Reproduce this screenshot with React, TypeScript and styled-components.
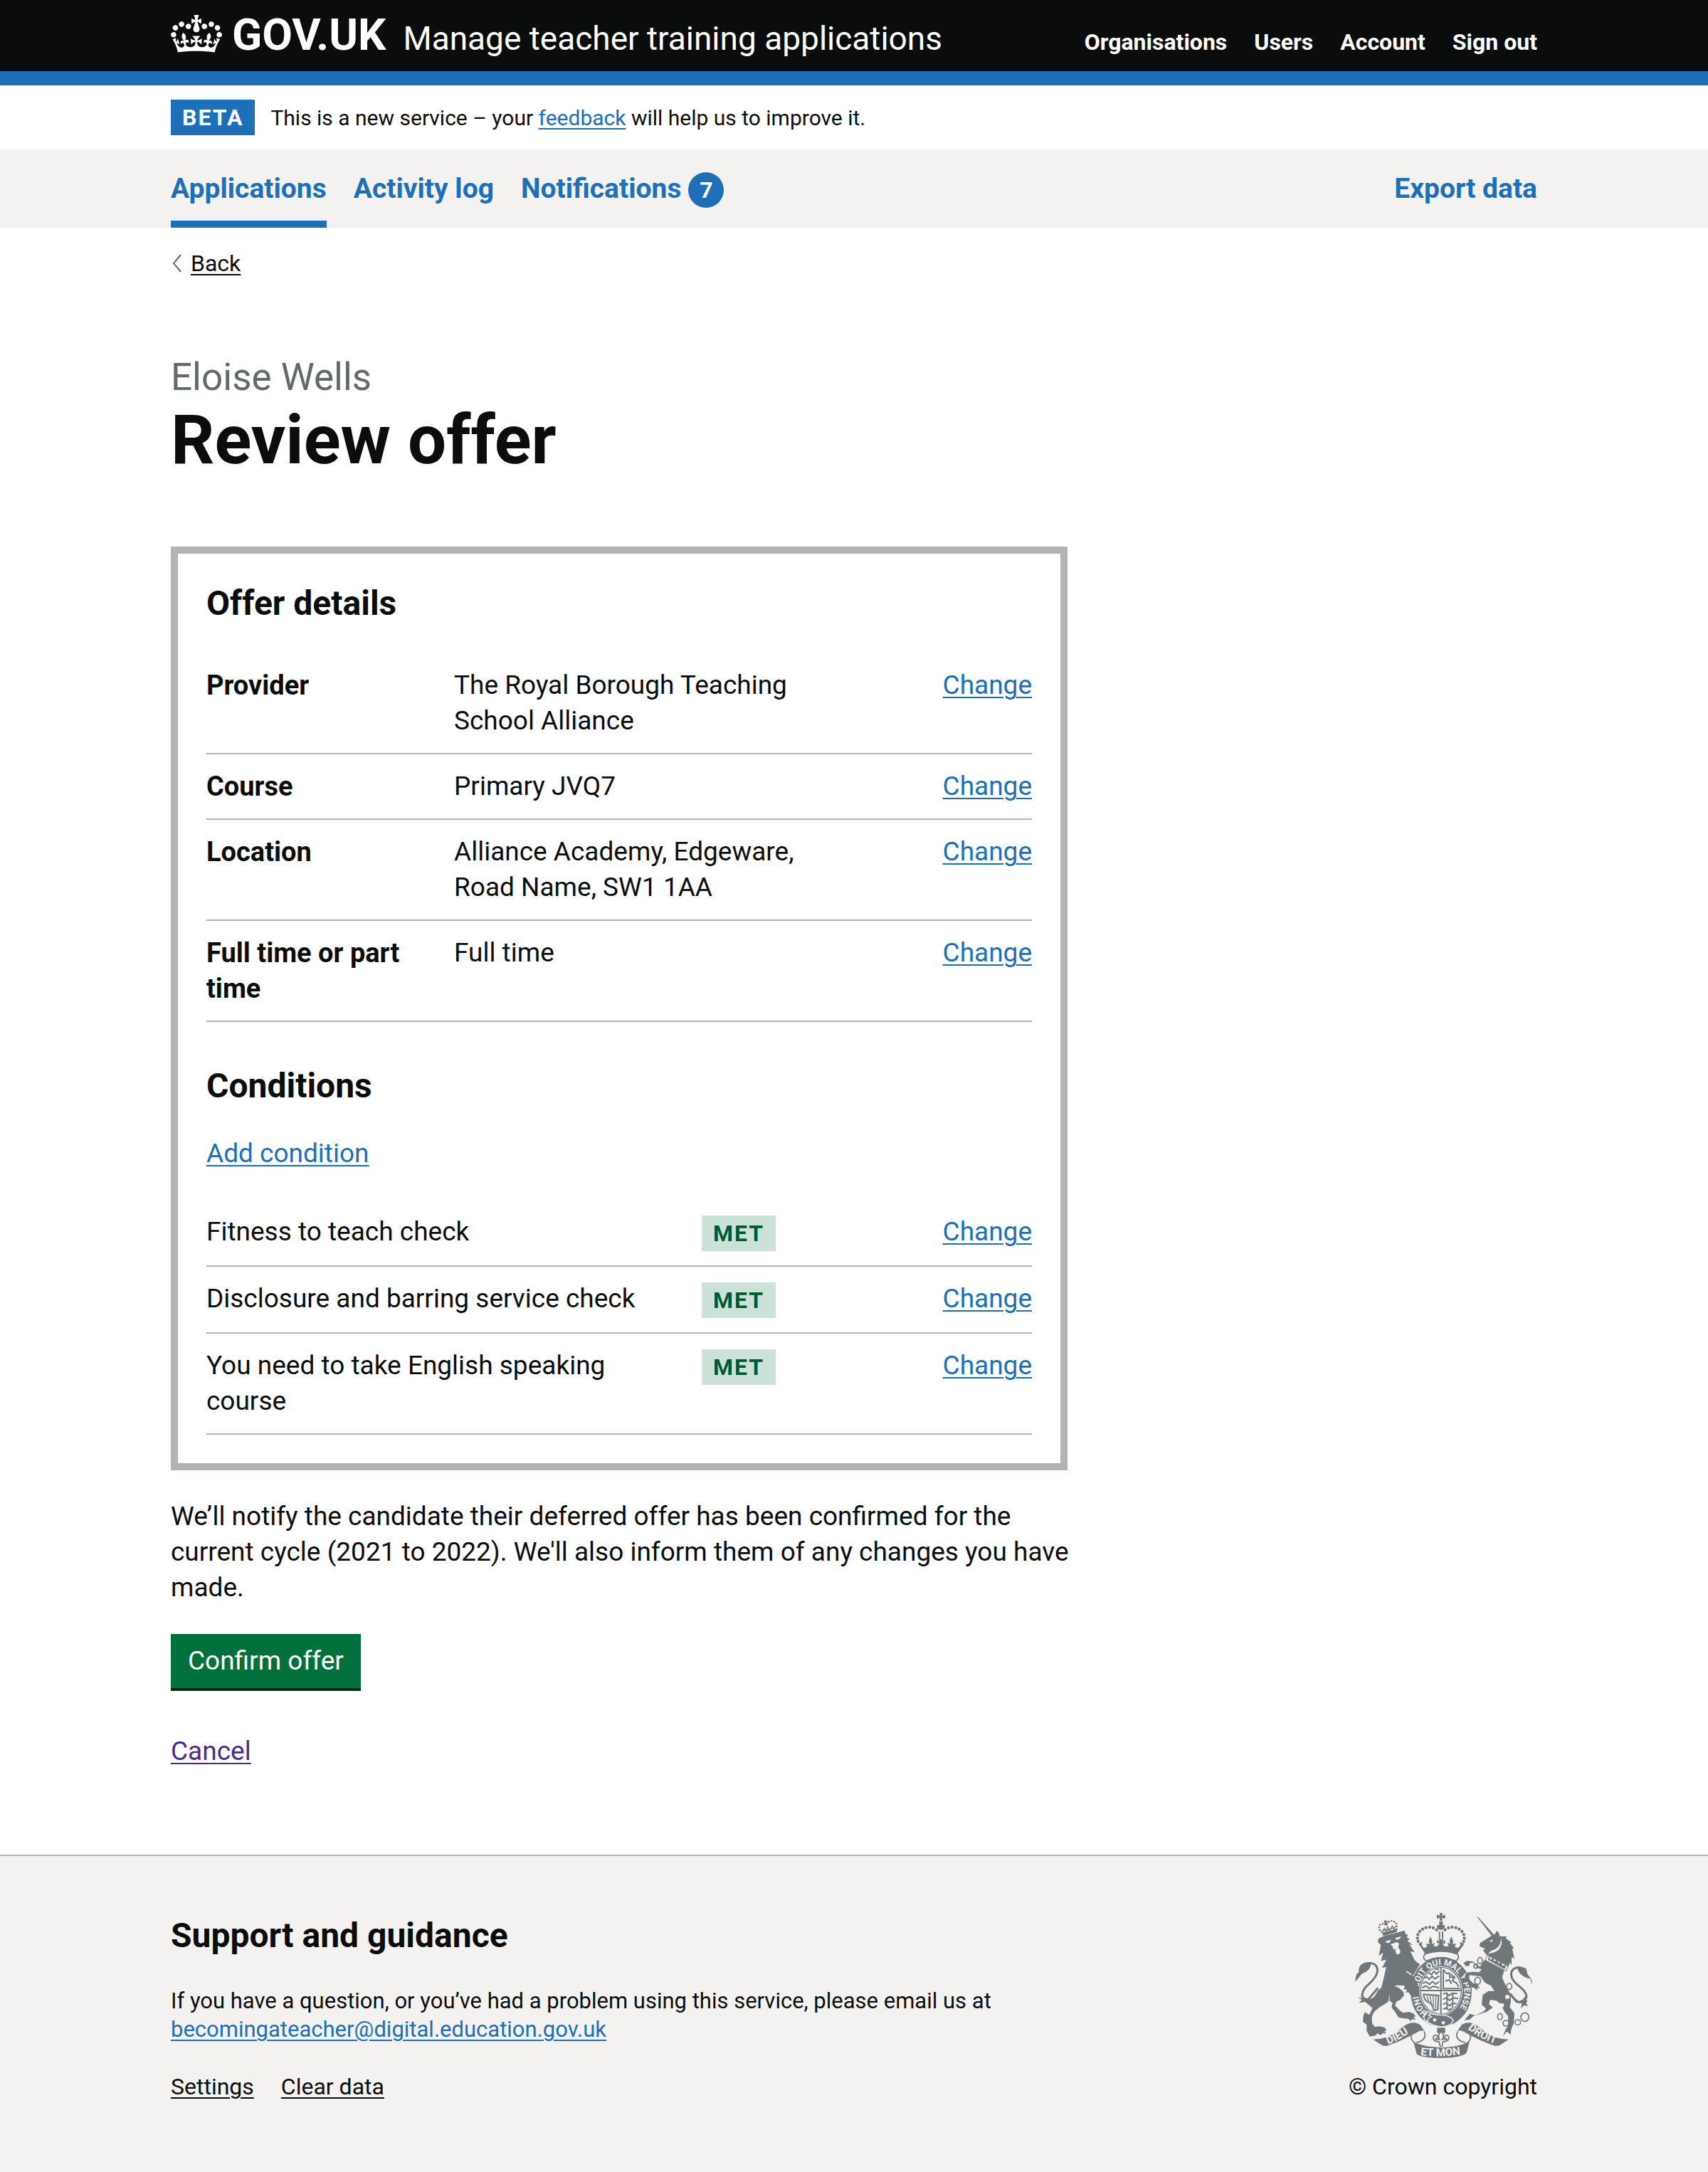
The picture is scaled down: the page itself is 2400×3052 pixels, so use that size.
import React from "react";
import styled, { createGlobalStyle, css } from "styled-components";

const colour = {
  text: "#0b0c0c",
  secondary: "#626a6e",
  blue: "#1d70b8",
  visited: "#4c2c92",
  grey: "#b1b4b6",
  cardGrey: "#b2b3b4",
  light: "#f3f2f1",
  green: "#00703c",
  greenShadow: "#002d18",
  tagGreen: "#cce2d8",
  tagGreenText: "#005a30",
  crest: "#6f777b",
};

const GlobalStyle = createGlobalStyle`
  *, *::before, *::after { box-sizing: border-box; }
  body {
    margin: 0;
    background: ${colour.light};
    color: ${colour.text};
    font-family: Roboto, "Liberation Sans", sans-serif;
    font-size: 37px;
    line-height: 50px;
  }
  h1, h2, p, dl, dd, dt, ul { margin: 0; padding: 0; }
  ul { list-style: none; }
`;

const Container = styled.div`
  max-width: 1920px;
  margin: 0 auto;
  @media (max-width: 2040px) {
    margin: 0 60px;
  }
`;

const Header = styled.header`
  background: ${colour.text};
  color: #fff;
  border-bottom: 20px solid ${colour.blue};
`;

const HeaderRow = styled(Container)`
  display: flex;
  flex-wrap: wrap;
  align-items: baseline;
  min-height: 100px;
  padding-top: 14px;
`;

const Brand = styled.a`
  display: flex;
  align-items: baseline;
  gap: 14px;
  color: #fff;
  font-size: 62px;
  font-weight: 700;
  line-height: 70px;
  text-decoration: none;
`;

const CrownSvg = styled.svg`
  width: 72px;
  height: 53px;
  align-self: flex-start;
  margin-top: 7px;
`;

const ServiceName = styled.a`
  margin-left: 24px;
  color: #fff;
  font-size: 46px;
  line-height: 60px;
  text-decoration: none;
`;

const AccountNav = styled.ul`
  display: flex;
  gap: 38px;
  margin-left: auto;
`;

const AccountLink = styled.a`
  color: #fff;
  font-size: 32px;
  font-weight: 700;
  line-height: 40px;
  text-decoration: none;
`;

const White = styled.div`
  background: #fff;
`;

const PhaseBanner = styled(Container)`
  display: flex;
  align-items: baseline;
  gap: 22px;
  padding: 20px 0;
`;

const PhaseText = styled.p`
  font-size: 30px;
  line-height: 40px;
`;

const Tag = styled.strong<{ $tone: "blue" | "green" }>`
  display: inline-block;
  padding: 0 16px;
  font-size: 32px;
  line-height: 50px;
  letter-spacing: 2px;
  text-transform: uppercase;
  ${(p) =>
    p.$tone === "blue"
      ? css`
          background: ${colour.blue};
          color: #fff;
        `
      : css`
          background: ${colour.tagGreen};
          color: ${colour.tagGreenText};
        `}
`;

const Link = styled.a<{ $tone?: "text" | "visited" }>`
  color: ${(p) =>
    p.$tone === "text" ? colour.text : p.$tone === "visited" ? colour.visited : colour.blue};
  text-decoration: underline;
  text-decoration-thickness: 2px;
  text-underline-offset: 4px;
`;

const PrimaryNav = styled.nav`
  background: ${colour.light};
`;

const NavRow = styled(Container)`
  display: flex;
  justify-content: space-between;
`;

const NavList = styled.ul`
  display: flex;
  gap: 38px;
`;

const NavLink = styled.a<{ $current?: boolean }>`
  display: flex;
  align-items: baseline;
  height: 110px;
  padding-top: 30px;
  border-bottom: 10px solid ${(p) => (p.$current ? colour.blue : "transparent")};
  color: ${colour.blue};
  font-size: 39px;
  font-weight: 700;
  text-decoration: none;
`;

const Count = styled.span`
  width: 50px;
  margin-left: 10px;
  border-radius: 50%;
  background: ${colour.blue};
  color: #fff;
  font-size: 32px;
  text-align: center;
`;

const Main = styled.main`
  padding-bottom: 120px;
`;

const BackRow = styled.div`
  display: flex;
  align-items: center;
  gap: 12px;
  padding: 30px 0 110px;
  font-size: 32px;
  line-height: 40px;
`;

const Chevron = styled.svg`
  width: 16px;
  height: 26px;
`;

const Caption = styled.span`
  display: block;
  margin-bottom: 8px;
  color: ${colour.secondary};
  font-size: 53px;
  font-weight: 400;
  line-height: 60px;
`;

const Title = styled.h1`
  margin-bottom: 100px;
  font-size: 96px;
  line-height: 100px;
`;

const Column = styled.div`
  max-width: 1280px;
`;

const Card = styled.section`
  max-width: 1260px;
  margin-bottom: 40px;
  padding: 40px;
  border: 10px solid ${colour.cardGrey};
`;

const Heading = styled.h2`
  margin-bottom: 40px;
  font-size: 48px;
  line-height: 60px;
`;

const FooterHeading = styled(Heading)`
  line-height: 64px;
`;

const SummaryList = styled.dl`
  margin-bottom: 60px;
  &:last-child {
    margin-bottom: 0;
  }
`;

const SummaryRow = styled.div<{ $columns: string }>`
  display: grid;
  grid-template-columns: ${(p) => p.$columns};
  padding: 20px 0;
  border-bottom: 2px solid ${colour.cardGrey};
`;

const Key = styled.dt<{ $plain?: boolean }>`
  padding-right: 40px;
  ${(p) =>
    !p.$plain &&
    css`
      font-size: 38px;
      font-weight: 700;
    `}
`;

const Value = styled.dd`
  padding-right: 40px;
`;

const TagCell = styled.dd`
  display: flex;
  align-items: flex-start;
  padding-top: 2px;
`;

const Action = styled.dd`
  text-align: right;
`;

const Paragraph = styled.p`
  margin-bottom: 40px;
`;

const SmallParagraph = styled(Paragraph)`
  font-size: 31px;
  line-height: 40px;
`;

const Button = styled.button`
  display: block;
  height: 76px;
  margin: 0 0 64px;
  padding: 0 24px;
  border: 0;
  background: ${colour.green};
  box-shadow: 0 4px 0 ${colour.greenShadow};
  color: #fff;
  font: inherit;
  cursor: pointer;
`;

const Footer = styled.footer`
  padding: 80px 0 100px;
  border-top: 2px solid ${colour.grey};
  background: ${colour.light};
  font-size: 32px;
  line-height: 40px;
`;

const FooterRow = styled(Container)`
  display: flex;
  justify-content: space-between;
  align-items: flex-start;
  gap: 60px;
`;

const FooterLinks = styled.ul`
  display: flex;
  gap: 38px;
`;

const Copyright = styled.a`
  display: flex;
  flex-direction: column;
  align-items: center;
  gap: 20px;
  color: ${colour.text};
  text-decoration: none;
  white-space: nowrap;
`;

const CrestSvg = styled.svg`
  width: 250px;
  height: 204px;
`;

function Crown() {
  return (
    <CrownSvg viewBox="0 0 132 97" aria-hidden="true">
      <path
        fill="currentColor"
        fillRule="evenodd"
        d="M25 30.2c3.5 1.5 7.7-.2 9.1-3.7 1.5-3.6-.2-7.8-3.9-9.2-3.6-1.4-7.6.3-9.1 3.9-1.4 3.5.3 7.5 3.9 9zM9 39.5c3.6 1.5 7.8-.2 9.2-3.7 1.5-3.6-.2-7.8-3.9-9.1-3.6-1.5-7.6.2-9.1 3.8-1.4 3.5.3 7.5 3.8 9zM4.4 57.2c3.5 1.5 7.7-.2 9.1-3.8 1.5-3.6-.2-7.7-3.9-9.1-3.5-1.5-7.6.3-9.1 3.8-1.4 3.5.3 7.6 3.9 9.1zm38.3-21.4c3.5 1.5 7.7-.2 9.1-3.8 1.5-3.6-.2-7.7-3.9-9.1-3.6-1.5-7.6.3-9.1 3.8-1.3 3.6.4 7.7 3.9 9.1zm64.4-5.6c-3.6 1.5-7.8-.2-9.1-3.7-1.5-3.6.2-7.8 3.8-9.2 3.6-1.4 7.7.3 9.2 3.9 1.3 3.5-.4 7.5-3.9 9zm15.9 9.3c-3.6 1.5-7.7-.2-9.1-3.7-1.5-3.6.2-7.8 3.7-9.1 3.6-1.5 7.7.2 9.2 3.8 1.5 3.5-.3 7.5-3.8 9zm4.7 17.7c-3.6 1.5-7.8-.2-9.2-3.8-1.5-3.6.2-7.7 3.9-9.1 3.6-1.5 7.7.3 9.2 3.8 1.3 3.5-.4 7.6-3.9 9.1zM89.3 35.8c-3.6 1.5-7.8-.2-9.2-3.8-1.4-3.6.2-7.7 3.9-9.1 3.6-1.5 7.7.3 9.2 3.8 1.4 3.6-.3 7.7-3.9 9.1zM69.7 17.7l8.9 4.7V9.3l-8.9 2.8c-.2-.3-.5-.6-.9-.9L72.4 0H59.6l3.5 11.2c-.3.3-.6.5-.9.9l-8.8-2.8v13.1l8.8-4.7c.3.3.6.7.9.9l-5 15.4v.1c-.2.8-.4 1.6-.4 2.4 0 4.1 3.1 7.5 7 8.1h.2c.3 0 .7.1 1 .1.4 0 .7 0 1-.1h.2c4-.6 7.1-4.1 7.1-8.1 0-.8-.1-1.7-.4-2.4V34l-5.1-15.4c.4-.2.7-.6 1-.9zM66 92.8c16.9 0 32.8 1.1 47.1 3.2 4-16.9 8.9-26.7 14-33.5l-9.6-3.4c1 4.9 1.1 7.2 0 10.2-1.5-1.4-3-4.3-4.2-8.7L108.6 76c2.8-2 5-3.2 7.5-3.3-4.4 9.4-10 11.9-13.6 11.2-4.3-.8-6.3-4.6-5.6-7.9 1-4.7 5.7-5.9 8-.5 4.3-8.7-3-11.4-7.6-8.8 7.1-7.2 7.9-13.5 2.1-21.1-8 6.1-8.1 12.3-4.5 20.8-4.7-5.4-12.1-2.5-9.5 6.2 3.4-5.2 7.9-2 7.2 3.1-.6 4.3-6.4 7.8-13.5 7.2-10.3-.9-10.9-8-11.2-13.8 2.5-.5 7.1 1.8 11 7.3L80.2 60c-4.1 4.4-8 5.3-12.3 5.4 1.4-4.4 8-11.6 8-11.6H55.5s6.4 7.2 7.9 11.6c-4.2-.1-8-1-12.3-5.4l1.4 16.4c3.9-5.5 8.5-7.7 10.9-7.3-.3 5.8-.9 12.8-11.1 13.8-7.2.6-12.9-2.9-13.5-7.2-.7-5 3.8-8.3 7.1-3.1 2.7-8.7-4.6-11.6-9.4-6.2 3.7-8.5 3.6-14.7-4.6-20.8-5.8 7.6-5 13.9 2.2 21.1-4.7-2.6-11.9.1-7.7 8.8 2.3-5.5 7.1-4.2 8.1.5.7 3.3-1.3 7.1-5.7 7.9-3.5.7-9-1.8-13.5-11.2 2.5.1 4.7 1.3 7.5 3.3l-4.7-15.4c-1.2 4.4-2.7 7.2-4.3 8.7-1.1-3-.9-5.3 0-10.2l-9.5 3.4c5 6.9 9.9 16.7 14 33.5 14.8-2.1 30.8-3.2 47.7-3.2z"
      />
    </CrownSvg>
  );
}

const crownPearls: Array<[number, number]> = [
  [419, 155], [405, 147], [390, 144], [374, 146], [360, 152], [348, 162], [340, 175], [338, 190], [341, 204],
];

const unicornChain: Array<[number, number, number, number]> = [
  [602, 285, 10, 13], [584, 308, 8, 9], [592, 370, 12, 15], [725, 394, 11, 13], [686, 521, 10, 13],
  [711, 549, 12, 12], [761, 545, 12, 11], [791, 523, 17, 18],
];

function Crest() {
  const g = colour.crest;
  const bg = colour.light;
  return (
    <CrestSvg viewBox="72 84 750 612" aria-hidden="true">
      <defs>
        <path id="garter" d="M383 508A97 112 0 1 1 486 514" />
        <path id="dieu" d="M215 638Q264 620 322 576" />
        <path id="mon" d="M351 684Q437 694 530 679" />
        <path id="droit" d="M550 573Q605 618 680 640" />
      </defs>

      {/* lion */}
      <g fill={g}>
        <path d="M192 183L284 158L287 172L299 178L292 187L306 194L296 202L319 220L304 217L326 249L308 246L326 282L344 299C338 318 322 330 317 347L345 371L338 386L349 409L337 431L328 424L330 440L315 434L304 425L309 413L289 421L294 406L280 407L285 391L265 389L240 390L263 402L279 417L282 431L265 451L249 458L244 474L264 496L278 505L303 501L321 508L332 520L322 522L331 534L316 532L310 539L299 530L280 528L259 525L242 498L229 483L233 463L220 454L222 423L215 459L175 484L155 502L146 521L147 549L158 564L178 562L199 566L209 579L199 582L206 592L190 592L183 600L170 591L161 601L138 605L124 582L124 555L108 543L110 519L116 502L135 513L150 482L158 443L171 411L186 399L198 351L206 312L189 315L207 281L184 286L194 251L175 265L184 219L171 206L174 192Z" />
        <path d="M76 374C78 350 80 340 92 333C86 311 104 291 132 292C143 295 144 304 138 315C124 339 103 334 96 350Z" />
        <path d="M149 485L118 459L91 463L104 451L88 441L109 443L101 424L117 442L132 447Q148 449 161 430L170 414L166 440Z" />
      </g>
      <path d="M123 299C152 287 175 307 168 336C158 379 107 389 105 430Q106 453 132 447L172 400" fill="none" stroke={g} strokeWidth="9" />
      <path d="M318 347L292 331" stroke={bg} strokeWidth="5" />
      <g fill={bg}>
        <path d="M202 204L227 197L221 209L210 211Z" />
        <path d="M244 190L270 182L262 194L250 197Z" />
        <path d="M224 216L252 207L261 213L257 229L266 243Q269 257 254 259Q243 254 246 234L237 239L234 226Z" />
      </g>
      <g fill={g} stroke={g}>
        <path d="M189 168L252 151L250 164L195 181Z" />
        <path d="M188 157Q214 162 240 142M192 163L199 148L207 162L212 142L221 158L232 139L239 154L247 139" fill="none" strokeWidth="4" />
        <path d="M188 165C177 158 173 144 180 135C190 126 200 130 207 137C212 119 229 113 240 121C253 126 252 140 249 156" fill="none" strokeWidth="8" strokeDasharray="0 12" strokeLinecap="round" />
        <path d="M197 119L212 133M202 114L209 136M212 118L198 130" strokeWidth="5" />
      </g>

      {/* central crown */}
      <g fill={g}>
        <path d="M431 84H445L441 96L455 91V108L441 104L445 116H431L434 104L420 108V91L434 96Z" />
        <path d="M430 119H445V136H454Q456 153 438 156Q418 154 420 136H430Z" />
        {crownPearls.map(([x, y]) => (
          <React.Fragment key={`${x}-${y}`}>
            <circle cx={x} cy={y} r="6.5" />
            <circle cx={874 - x} cy={y} r="6.5" />
          </React.Fragment>
        ))}
        <path d="M428 162H434V192H428ZM441 162H447V192H441Z" />
        <path d="M342 214L359 206L356 220L365 232L380 226L374 213L389 216L386 202L393 183L401 203L398 215L411 210L406 224L421 225L431 212L420 211V199L433 205L425 194H450L442 205L455 199V214L442 212L453 225L470 224L464 210L477 214L473 202L481 183L489 202L487 216L500 212L496 227L510 232L520 219L517 206L536 214L511 249L504 261Q438 242 372 261L363 244Z" />
      </g>
      <path d="M369 258Q437 233 507 258Q518 272 502 287L482 281Q437 263 380 284L370 283Q359 272 369 258Z" fill={bg} stroke={g} strokeWidth="5" />

      {/* garter and shield */}
      <ellipse cx="438" cy="416" rx="129" ry="147" fill={g} />
      <path d="M346 298L315 347" stroke={g} strokeWidth="8" />
      <ellipse cx="437" cy="412" rx="91" ry="104" fill={bg} />
      <ellipse cx="437" cy="412" rx="86" ry="99" fill="none" stroke={g} strokeWidth="4" />
      <path d="M437 314V510M351 411H524" stroke={g} strokeWidth="6" />
      <g fill="none" stroke={g} strokeWidth="6">
        <path d="M385 336L397 344L408 330L419 341L430 328M366 359L378 353L388 364L400 351L412 362L430 350M361 381L375 374L389 386L401 373L416 384L430 373M358 399L373 392L389 402L405 393L430 400M413 322L429 320" />
        <path d="M447 322V403H518M449 325L461 340L472 337L475 356L493 353L486 371L503 379L512 396M456 372L472 365L482 383M478 340L497 360" />
        <path d="M446 426L461 421L472 433L484 422L506 424M446 448L462 441L473 453L488 442L510 445M446 469L460 463L474 475L487 463L502 467M446 490L459 484L472 494L485 484M463 422V493M487 423V483" />
        <path d="M364 427L427 432L424 492L407 495Q403 464 376 456Q365 443 364 427Z" />
        <path d="M378 430L386 459M391 431L397 468M404 431L406 478M416 432L415 490" strokeWidth="4" />
      </g>
      <path d="M372 498C390 508 410 516 440 514C458 516 476 518 490 536L478 554C440 574 405 560 376 541L367 523Z" fill={g} stroke={bg} strokeWidth="4" />
      <path d="M371 504Q384 496 395 508L385 514L398 522L384 528L381 543Q363 536 366 518Z" fill={g} stroke={bg} strokeWidth="4" />
      <circle cx="411" cy="535" r="7" fill={bg} />
      <circle cx="447" cy="547" r="7" fill={bg} />
      <text fill={bg} fontSize="36" fontWeight="700">
        <textPath href="#garter">
          HONI <tspan dx="26">SOIT QUI MAL Y PENSE</tspan>
        </textPath>
      </text>
      <path d="M303 382L338 371L344 420L334 440L312 432L300 418Z" fill={g} />

      {/* unicorn */}
      <g fill={g}>
        <path d="M588 99L594 101L662 177L651 181Z" />
        <path d="M652 179L667 171L671 158L682 169L685 182L716 183L709 190L734 208L728 211L746 234L738 234L747 277L736 270L734 303L727 294L723 309L630 262L617 245L615 231L600 224L602 211L626 196Z" />
        <path d="M621 282L704 326L695 356L713 395L731 427L732 459L727 481L747 506L744 549L733 576L732 596L714 584L699 604L709 576L722 557L720 518L705 501L690 469L671 454L644 450L640 469L656 482L631 500L602 510L574 519L559 533L536 536L559 509L582 516L614 501L628 488L609 470L613 430L637 413L663 413L648 391L623 378L603 351L582 349L558 346L555 363L571 379L590 385L602 402L589 399L593 411L577 400L559 395L547 370L533 381L541 349L548 335L571 332L599 334L609 322L591 316L575 294L560 295L554 309L542 307L531 295L548 286L574 289L588 306L602 310Z" />
        <path d="M824 391L813 361Q767 352 759 315L782 313L797 319L803 345Q822 359 824 391Z" />
        <path d="M729 432L754 463L779 465L774 486L788 473L804 477L796 463L803 455L792 448L794 434L782 449L765 456Q744 450 734 422Z" />
      </g>
      <path d="M786 319C750 303 726 326 736 356C747 389 798 404 798 437Q791 462 765 460Q744 450 730 424" fill="none" stroke={g} strokeWidth="9" />
      <path d="M690 188C692 215 676 238 650 242L635 257L662 250C686 241 699 219 690 188Z" fill={bg} />
      <path d="M640 204L653 196L656 204Z" fill={bg} />
      <path d="M607 235L623 235" stroke={bg} strokeWidth="5" />
      <path d="M632 262L720 308L712 329L624 283Z" fill={bg} stroke={g} strokeWidth="3" />
      <path d="M635 281L640 266L646 283L657 272L662 289L674 281L680 298L690 290L697 307L713 304L705 321Z" fill={g} />
      {unicornChain.map(([x, y, rx, ry]) => (
        <ellipse key={`${x}-${y}`} cx={x} cy={y} rx={rx} ry={ry} fill="none" stroke={g} strokeWidth="5" />
      ))}
      <g fill={bg}>
        <circle cx="717" cy="438" r="9" />
        <circle cx="694" cy="473" r="9" />
        <circle cx="725" cy="394" r="8" />
      </g>

      {/* motto ribbon */}
      <g fill={g} stroke={bg} strokeWidth="3">
        <path d="M147 616Q220 616 270 568Q314 530 350 554L370 583Q352 577 334 590Q270 626 210 646L192 645Z" />
        <path d="M727 616Q654 616 604 568Q560 530 524 554L504 583Q522 577 540 590Q604 626 664 646L682 645Z" />
        <path d="M320 628Q437 672 559 628L546 676Q520 697 437 697Q354 697 334 680Z" />
      </g>
      <g fill="none" stroke={g} strokeWidth="5">
        <path d="M355 575C330 581 307 594 312 612Q318 632 346 642M366 583C375 602 370 616 350 626L334 630" />
        <path d="M519 575C544 581 567 594 562 612Q556 632 528 642M508 583C499 602 504 616 524 626L540 630" />
      </g>
      <g fill={bg} fontSize="46" fontWeight="700">
        <text><textPath href="#dieu">DIEU</textPath></text>
        <text><textPath href="#mon">ET MON</textPath></text>
        <text><textPath href="#droit">DROIT</textPath></text>
      </g>

      {/* fleur-de-lis */}
      <path d="M421 568H455V590H421Z" fill={g} />
      <g fill={bg} stroke={g} strokeWidth="5">
        <path d="M438 583Q455 599 443 618H463Q457 606 447 612Q454 593 469 603Q476 620 456 626L445 628L442 645H433L430 628L419 626Q400 620 406 603Q421 593 429 612Q418 606 414 618H432Q420 599 438 583Z" />
      </g>
    </CrestSvg>
  );
}

const offerRows = [
  { key: "Provider", value: "The Royal Borough Teaching School Alliance" },
  { key: "Course", value: "Primary JVQ7" },
  { key: "Location", value: "Alliance Academy, Edgeware, Road Name, SW1 1AA" },
  { key: "Full time or part time", value: "Full time" },
];

const conditions = [
  "Fitness to teach check",
  "Disclosure and barring service check",
  "You need to take English speaking course",
];

export default function App() {
  return (
    <>
      <GlobalStyle />
      <Header>
        <HeaderRow>
          <Brand href="#">
            <Crown />
            GOV.UK
          </Brand>
          <ServiceName href="#">Manage teacher training applications</ServiceName>
          <AccountNav>
            {["Organisations", "Users", "Account", "Sign out"].map((item) => (
              <li key={item}>
                <AccountLink href="#">{item}</AccountLink>
              </li>
            ))}
          </AccountNav>
        </HeaderRow>
      </Header>

      <White>
        <PhaseBanner>
          <Tag $tone="blue">Beta</Tag>
          <PhaseText>
            This is a new service – your <Link href="#">feedback</Link> will help us to improve it.
          </PhaseText>
        </PhaseBanner>
      </White>

      <PrimaryNav aria-label="Primary">
        <NavRow>
          <NavList>
            <li>
              <NavLink href="#" $current aria-current="page">Applications</NavLink>
            </li>
            <li>
              <NavLink href="#">Activity log</NavLink>
            </li>
            <li>
              <NavLink href="#">
                Notifications <Count>7</Count>
              </NavLink>
            </li>
          </NavList>
          <NavLink href="#">Export data</NavLink>
        </NavRow>
      </PrimaryNav>

      <White>
        <Container>
          <Main>
            <BackRow>
              <Chevron viewBox="0 0 16 26" aria-hidden="true">
                <path d="M14 1L4 13L14 25" fill="none" stroke={colour.secondary} strokeWidth="2" />
              </Chevron>
              <Link href="#" $tone="text">Back</Link>
            </BackRow>
            <Title>
              <Caption>Eloise Wells</Caption>
              Review offer
            </Title>
            <Column>
              <Card>
                <Heading>Offer details</Heading>
                <SummaryList>
                  {offerRows.map((row) => (
                    <SummaryRow key={row.key} $columns="3fr 5fr 2fr">
                      <Key>{row.key}</Key>
                      <Value>{row.value}</Value>
                      <Action>
                        <Link href="#">Change</Link>
                      </Action>
                    </SummaryRow>
                  ))}
                </SummaryList>
                <Heading>Conditions</Heading>
                <Paragraph>
                  <Link href="#">Add condition</Link>
                </Paragraph>
                <SummaryList>
                  {conditions.map((condition) => (
                    <SummaryRow key={condition} $columns="3fr 1fr 1fr">
                      <Key $plain>{condition}</Key>
                      <TagCell>
                        <Tag $tone="green">Met</Tag>
                      </TagCell>
                      <Action>
                        <Link href="#">Change</Link>
                      </Action>
                    </SummaryRow>
                  ))}
                </SummaryList>
              </Card>
              <Paragraph>
                We’ll notify the candidate their deferred offer has been confirmed for the current
                cycle (2021 to 2022). We'll also inform them of any changes you have made.
              </Paragraph>
              <Button type="button">Confirm offer</Button>
              <Link href="#" $tone="visited">Cancel</Link>
            </Column>
          </Main>
        </Container>
      </White>

      <Footer>
        <FooterRow>
          <div>
            <FooterHeading>Support and guidance</FooterHeading>
            <SmallParagraph>
              If you have a question, or you’ve had a problem using this service, please email us at
              <br />
              <Link href="#">becomingateacher@digital.education.gov.uk</Link>
            </SmallParagraph>
            <FooterLinks>
              <li>
                <Link href="#" $tone="text">Settings</Link>
              </li>
              <li>
                <Link href="#" $tone="text">Clear data</Link>
              </li>
            </FooterLinks>
          </div>
          <Copyright href="#">
            <Crest />
            © Crown copyright
          </Copyright>
        </FooterRow>
      </Footer>
    </>
  );
}
